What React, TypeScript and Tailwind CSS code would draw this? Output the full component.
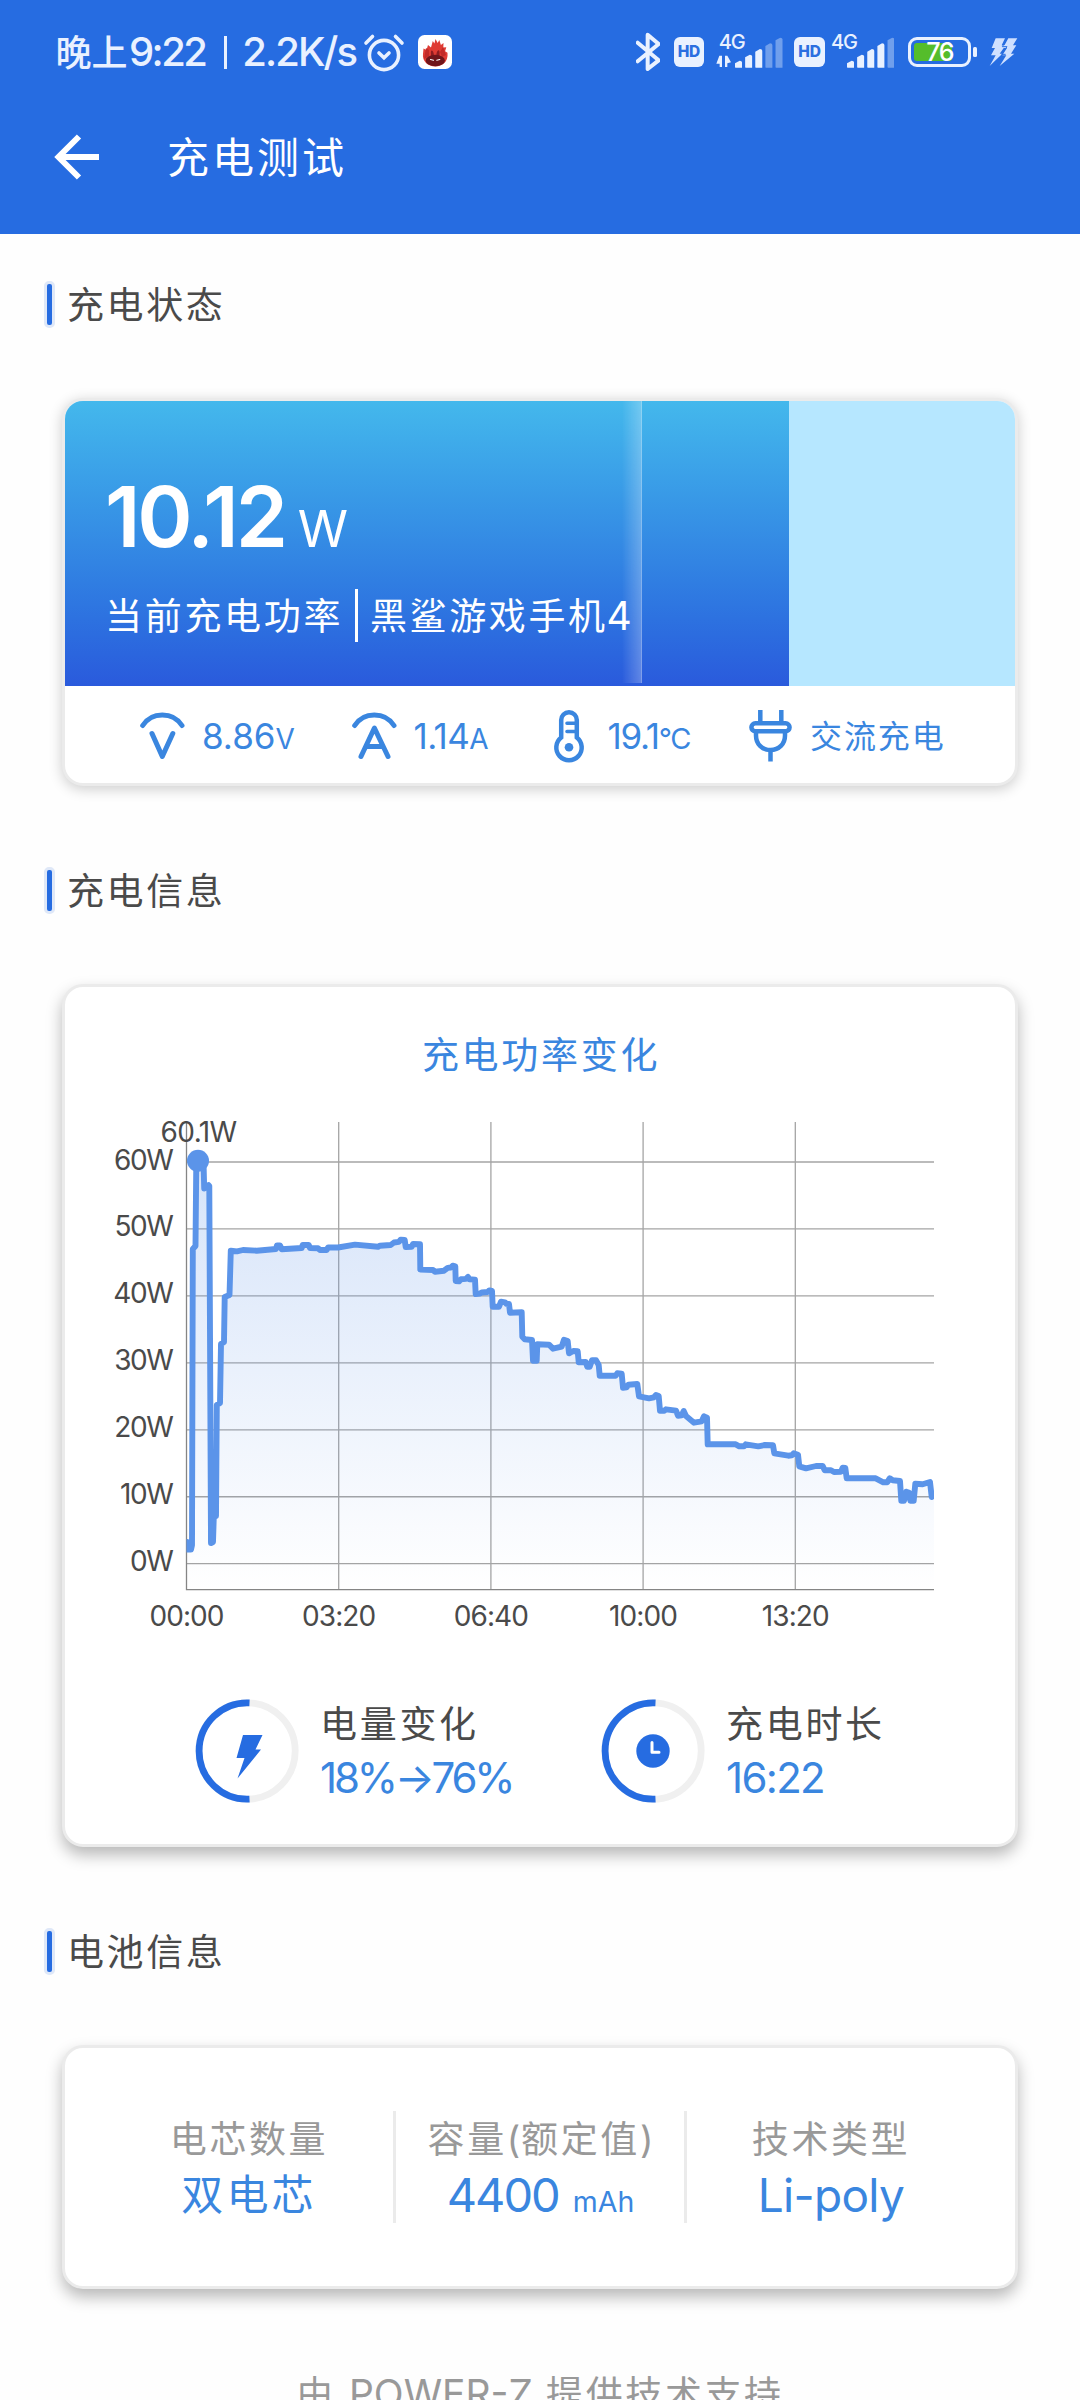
import type { ReactNode } from "react";

const FONT = "font-[Inter,'Noto_Sans_CJK_SC',sans-serif]";

/* ---------- status bar ---------- */

const ICE = "#e9f1ff";

function StatusSvg({ w, className = "", children }: { w: number; className?: string; children: ReactNode }) {
  return (
    <svg className={`h-[65px] shrink-0 ${className}`} style={{ width: w / 3 }} viewBox={`0 0 ${w} 195`} fill="none">
      {children}
    </svg>
  );
}

function AlarmIcon() {
  return (
    <svg className="ml-[6.500px] h-[40px] w-[42px] shrink-0" viewBox="0 0 42 40" fill="none" stroke={ICE} strokeWidth="3.6" strokeLinecap="round">
      <circle cx="21" cy="23" r="14.6" />
      <path d="M3 11 L9.500 4.500 M39 11 L32.500 4.500" strokeWidth="3.6" />
      <path d="M16 21 L21 25.700 L26 21" />
    </svg>
  );
}

function BenchmarkIcon() {
  return (
    <svg className="ml-[13px] h-[34px] w-[34px] shrink-0" viewBox="0 0 34 34">
      <rect width="34" height="34" rx="6.5" fill="#fff" />
      <path d="M17.5 4 l2.2 4 1.6-3 1.6 5 2.6-2 -.2 4.6 3-.4 -1.2 4 2.4 1.6 C30.5 27 24 31.5 17.5 31.5 C10 31.5 4 26 5 19 L5.5 13.5 l3 1.6 L10 10 l3 2.4 L14.8 6 l1.6 2.6z" fill="#df3b34" />
      <path d="M8 13 l3 2 v6 l-5 3z M25 12 l-3 5 2 5 4-2z" fill="#c22a28" />
      <path d="M13.6 15.5 c1.400-.5 2.200 2.500 2.400 5 h2.400 c0-2.500 1-5.500 2.300-5.200 c1.200 .3 1 4 .6 6 h-8 c-.4-2.500 -.7-5.500 .3-5.800z" fill="#8e1c20" />
      <ellipse cx="17.300" cy="25.500" rx="9.600" ry="5.800" fill="#6f151b" />
      <path d="M12.500 24.500 l3 .8 M21.800 24.500 l-3 .8" stroke="#fff" strokeWidth="1.100" strokeLinecap="round" />
    </svg>
  );
}

function HdBadge({ className }: { className: string }) {
  return (
    <div className={`mt-[17px] flex h-[30px] w-[30.500px] shrink-0 items-center justify-center rounded-[6px] bg-[#e9f1ff] text-[15.500px] leading-none font-extrabold tracking-[-0.3px] text-[#2b6ee0] ${className}`}>
      HD
    </div>
  );
}

const BAR_TOPS = [122, 104, 87, 70, 53];

function Signal({ strength, data, className }: { strength: number; data?: boolean; className: string }) {
  const x0 = data ? 57 : 48;
  return (
    <StatusSvg w={data ? 200 : 191} className={className}>
      <text x={data ? 8 : 0} y="86" fontSize="60" fontWeight="500" fill={ICE} letterSpacing="-3">4G</text>
      {data && (
        <path d="M10 107 h8 v34 h-7 v-10 L1 131z M27 141 h7 v-11 L45 127 L34 107 h-7z" fill={ICE} />
      )}
      {BAR_TOPS.map((t, i) => {
        const x = x0 + i * 30.400;
        return (
          <path key={t} d={`M${x} ${t + 8} L${x + 14} ${t} Q${x + 21} ${t} ${x + 21} ${t + 5} V143 H${x + 2} Q${x} 143 ${x} 141z`} fill={ICE} opacity={i < strength ? 1 : 0.38} />
        );
      })}
    </StatusSvg>
  );
}

function StatusBar() {
  return (
    <div className="flex h-[104px] items-start justify-between pr-[62px] pl-[55.500px] text-[#e9f1ff]">
      <div className="flex h-[104px] items-center">
        <span className="pt-[1px] text-[36px] leading-none font-medium">晚上</span>
        <span className="ml-[1.500px] text-[40px] leading-none font-medium tracking-[-2.600px]">9:22</span>
        <span className="ml-[18.500px] h-[33px] w-[3.500px] bg-[#e9f1ff]" />
        <span className="ml-[15px] text-[40px] leading-none font-medium tracking-[-1.900px]">2.2K/s</span>
        <AlarmIcon />
        <BenchmarkIcon />
      </div>
      <div className="flex items-start pt-[20px]">
        <StatusSvg w={73}>
          <path d="M5 68 L68 121 L35 147 V44 L68 72 L5 124" stroke={ICE} strokeWidth="12" strokeLinejoin="round" strokeLinecap="round" />
        </StatusSvg>
        <HdBadge className="ml-[13.500px]" />
        <Signal strength={3} data className="ml-[12px]" />
        <HdBadge className="ml-[11.500px]" />
        <Signal strength={4} className="ml-[6px]" />
        <div className="mt-[17px] ml-[13.500px] flex items-center">
          <div className="relative flex h-[30px] w-[63px] items-center rounded-[9px] border-[3px] border-[#e9f1ff]">
            <div className="ml-[3.500px] h-[18.500px] w-[37.500px] rounded-[3px] bg-[#55bd2b]" />
            <span className="absolute left-[15.500px] text-[25px] leading-none font-medium tracking-[-1.500px] text-white">76</span>
          </div>
          <div className="ml-[2.500px] h-[10px] w-[3.500px] rounded-[1.500px] bg-[#e9f1ff]" />
        </div>
        <StatusSvg w={86} className="ml-[12.500px]">
          <g fill="#cfe0ff">
            <path d="M20 55 H48 L38 76 H50 L32 101 H40 L2 138 L20 106 H6 L18 84 H8z" />
            <path d="M58 55 H85 L72 76 H82 L66 101 H76 L32 138 L52 106 H40 L54 84 H42z" />
          </g>
          <path d="M53 58 L40 80 H54 L38 103 H50" stroke="#266ce1" strokeWidth="3" />
        </StatusSvg>
      </div>
    </div>
  );
}

/* ---------- shared pieces ---------- */

function SectionTitle({ children, first }: { children: ReactNode; first?: boolean }) {
  return (
    <div className={`mb-[70px] ml-[44px] flex h-[47px] items-center ${first ? "mt-[47px]" : "mt-[81px]"}`}>
      <div className="h-[47px] w-[11px] rounded-[5px] border-3 border-[#dfe8f8] bg-[#266ce1]" />
      <h2 className="ml-[12px] pt-[2.500px] text-[37px] leading-none tracking-[2.600px] text-[#4a4a4a]">{children}</h2>
    </div>
  );
}

/* ---------- charging state card ---------- */

function VoltIcon() {
  return (
    <svg className="h-[54px] w-[45px]" viewBox="0 0 45 54" fill="none" stroke="#3a86df" strokeWidth="5" strokeLinecap="round" strokeLinejoin="round">
      <path d="M2.700 16.500 Q9.500 6 22.300 6 Q35.200 6 42 16.500" />
      <path d="M12 24.500 L22.300 47.500 L32.800 24.500" />
    </svg>
  );
}

function AmpIcon() {
  return (
    <svg className="h-[54px] w-[45px]" viewBox="0 0 45 54" fill="none" stroke="#3a86df" strokeWidth="5" strokeLinecap="round" strokeLinejoin="round">
      <path d="M2.700 16.500 Q9.500 6 22.300 6 Q35.200 6 42 16.500" />
      <path d="M9 47.500 L22.400 19 L36 47.500 M14 37.500 H31" />
    </svg>
  );
}

function ThermoIcon() {
  return (
    <svg className="h-[54px] w-[32px]" viewBox="0 0 32 54" fill="none" stroke="#3a86df" strokeWidth="4.500">
      <path d="M8.200 28.500 V11 A7.800 7.800 0 0 1 23.800 11 V28.500 A12.700 12.700 0 1 1 8.200 28.500Z" />
      <path d="M14 14.200 H23 M14 22.500 H23" strokeWidth="3.600" strokeLinecap="round" />
      <circle cx="16" cy="38.300" r="4.300" fill="#3a86df" stroke="none" />
    </svg>
  );
}

function PlugIcon() {
  return (
    <svg className="h-[54px] w-[43px]" viewBox="0 0 43 54" fill="none" stroke="#3a86df" strokeWidth="4.500">
      <path d="M11.300 1 V13 M32.300 1 V13 M21.500 41 V52.500" />
      <rect x="2.400" y="14.300" width="38.200" height="8" rx="4" />
      <path d="M7 23 V26.500 C7 35 13 41 21.500 41 C30 41 36 35 36 26.500 V23" />
    </svg>
  );
}

function StateCard() {
  return (
    <div className="mx-[62px] h-[388px] overflow-hidden rounded-[21px] border-3 border-[#ebebeb] bg-white shadow-[0_3px_14px_rgba(0,0,0,0.2)]">
      <div className="flex h-[285px] bg-[#b6e7ff]">
        <div className="relative w-[724px] bg-linear-to-b from-[#44b8ec] via-[#348ae4] to-[#2a5adc]">
          <div className="absolute top-0 left-[557px] h-[282px] w-[20px] border-r border-white/40 bg-linear-to-r from-white/0 to-white/25" />
          <div className="relative pt-[74px] pl-[40px] text-white">
            <div className="flex h-[84px] items-baseline leading-[84px]">
              <span className="text-[84px] font-semibold tracking-[-3.200px]">10.12</span>
              <span className="ml-[13px] text-[51px] tracking-tight">W</span>
            </div>
            <div className="mt-[30px] flex h-[53px] items-center whitespace-nowrap text-[37px] leading-none">
              <span className="w-[250px] pt-[2px] tracking-[2.700px]">当前充电功率</span>
              <span className="h-[53px] w-[3px] bg-white" />
              <span className="ml-[12px] flex items-center tracking-[2.600px]">
                <span className="pt-[2px]">黑鲨游戏手机</span>
                <span className="-ml-[1px] text-[39px]">4</span>
              </span>
            </div>
          </div>
        </div>
      </div>
      <div className="flex h-[97px] items-center pt-[3px] pl-[75px] text-[35px] leading-none text-[#3a86df]">
        <div className="flex w-[211.500px] items-center">
          <span className="w-[62px]"><VoltIcon /></span>
          <span>8.86<span className="text-[28px]">V</span></span>
        </div>
        <div className="flex w-[201px] items-center">
          <span className="w-[62px]"><AmpIcon /></span>
          <span className="tracking-[-0.600px]">1.14<span className="text-[28px]">A</span></span>
        </div>
        <div className="flex w-[196.500px] items-center">
          <span className="w-[55px]"><ThermoIcon /></span>
          <span className="tracking-[-1.300px]">19.1<span className="text-[29px]">°C</span></span>
        </div>
        <div className="flex items-center">
          <span className="w-[61px]"><PlugIcon /></span>
          <span className="pt-[1px] text-[32px] tracking-[1.900px]">交流充电</span>
        </div>
      </div>
    </div>
  );
}

/* ---------- power chart ---------- */

const CURVE =
  "187,1542 187.5,1549.5 191,1549.5 192,1545 192.8,1249 195.500,1246 196.3,1161 203.5,1161 204.2,1188.5 208.5,1185 209.3,1186 211,1543 213,1542 213.8,1516.5 216,1516 216.8,1405 220,1403 221,1344 224,1342 224.7,1297 229.5,1295 230.8,1250.7 237,1251.400 243,1250 256.7,1250.7 276,1249 277,1245.4 280,1245.4 281.7,1249.300 301.7,1248 302.700,1245 308.7,1245 310,1248 318,1248.200 320,1250 326.7,1250 328,1247.500 338,1247.500 355,1244.6 378,1246.800 380,1245.700 390.700,1245 394,1242.500 399,1241.800 400.700,1239.600 404.700,1240 405.700,1247 411.700,1246.800 413,1244 420,1244.300 420.300,1269.600 433,1270 435,1271.800 444,1270.700 447.700,1267.900 451,1267.500 452.700,1265.700 455.300,1266.400 455.700,1281 459,1281.400 461,1279.300 466,1278.900 468,1277 469.300,1279.300 475,1279.600 475.700,1294 480,1293.600 481.700,1292.500 487.700,1292 489.300,1290.400 492,1291 492.700,1306.700 499,1306.700 501,1301.700 505,1302.300 506.300,1303.700 509,1304 510,1312.700 521.700,1312.300 522.300,1336.700 524.700,1339.300 532,1340 533,1360.700 536.700,1360.700 537.300,1344.300 549,1344.700 553,1348.700 561.700,1346.700 564,1339.700 567.700,1341 569,1353.300 573.300,1351 577.700,1351.300 578.700,1362.300 585.700,1362 587.300,1366.700 589.700,1366.700 592,1360.300 596,1360.300 598.700,1365 599.700,1375.700 615.700,1375.700 617.300,1373.300 621.700,1373.700 623,1387.700 626.700,1387.300 628.300,1384.700 637.300,1384 639,1396.300 649,1398.300 654,1397.300 656,1395 658.700,1396 660,1410.700 664.300,1410.700 666,1409.300 676,1410.700 678,1415.700 681.700,1415.300 683.700,1411 686,1416 694,1422.700 701.700,1421.300 704,1416.300 707,1417.700 707.700,1444.300 735.700,1444.300 739.300,1446.300 744,1446.300 745.700,1444.300 758.300,1446.300 765,1445 773,1445.300 774.300,1453.300 788.300,1455.700 791.700,1455.300 793.700,1453.300 798,1454.700 799.300,1466.300 806,1468.300 816,1466 822.700,1466 824.700,1470.300 831,1470.300 834,1472 841,1471.700 842.700,1467.700 845.300,1468 846.700,1478.300 875.700,1478.300 883.300,1482.300 887.300,1482.300 889.700,1478.300 892.700,1480.300 900,1481 901.300,1500.700 904,1500.700 906.300,1491.700 909.300,1492.700 910.300,1500.700 913.700,1500.700 915.300,1483.700 922.700,1484.300 930,1482 931.700,1497 934,1495";

const WATTS = [0, 10, 20, 30, 40, 50, 60];
const TIMES = ["00:00", "03:20", "06:40", "10:00", "13:20"];
const yOf = (w: number) => 1563.7 - w * 6.695;
const xOf = (i: number) => 186.5 + i * 152.2;

function PowerChart() {
  return (
    <svg className="ml-[35px] h-[540px] w-[850px]" viewBox="100 1100 850 540" fontSize="28" fill="#4a4a4a">
      <defs>
        <linearGradient id="area" gradientUnits="userSpaceOnUse" x1="0" y1="1161" x2="0" y2="1590">
          <stop offset="0" stopColor="#5b91e8" stopOpacity="0.250" />
          <stop offset="1" stopColor="#5b91e8" stopOpacity="0" />
        </linearGradient>
        <clipPath id="plot"><rect x="186.500" y="1110" width="747.500" height="490" /></clipPath>
      </defs>
      <g stroke="#a4a4a4" strokeWidth="1.300">
        {WATTS.map((w) => <line key={w} x1="186.500" x2="934" y1={yOf(w)} y2={yOf(w)} />)}
        {TIMES.slice(1).map((t, i) => <line key={t} x1={xOf(i + 1)} x2={xOf(i + 1)} y1="1122" y2="1589.700" />)}
      </g>
      <path d="M186.500 1122 V1589.700 H934" stroke="#858585" strokeWidth="1.300" fill="none" />
      <g clipPath="url(#plot)">
        <polygon points={`187,1590 ${CURVE} 934,1590`} fill="url(#area)" />
        <polyline points={CURVE} fill="none" stroke="#5b94e9" strokeWidth="5.900" strokeLinejoin="round" strokeLinecap="round" />
      </g>
      <circle cx="198" cy="1160.800" r="11" fill="#5b94e9" />
      <text x="198.500" y="1142" textAnchor="middle" letterSpacing="-0.600">60.1W</text>
      {WATTS.map((w) => (
        <text key={w} x="172.500" y={yOf(w) + 7.500} textAnchor="end" letterSpacing="-1.400">{w}W</text>
      ))}
      {TIMES.map((t, i) => (
        <text key={t} x={xOf(i)} y="1625.500" textAnchor="middle" letterSpacing="-0.900">{t}</text>
      ))}
    </svg>
  );
}

function Ring({ children }: { children: ReactNode }) {
  return (
    <svg className="h-[104px] w-[104px] shrink-0" viewBox="0 0 104 104" fill="none">
      <circle cx="52" cy="52" r="48.200" stroke="#f0f0f0" strokeWidth="6.800" />
      <path d="M54.500 3.850 A48.200 48.200 0 1 0 54.500 100.150" stroke="#266ce1" strokeWidth="6.800" />
      {children}
    </svg>
  );
}

function InfoCard() {
  return (
    <div className="mx-[62px] h-[863px] rounded-[21px] border-3 border-[#ebebeb] bg-white shadow-[0_8px_16px_rgba(0,0,0,0.28)]">
      <h3 className="mt-[47px] pl-[2px] text-center text-[37px] leading-[44px] tracking-[2.700px] text-[#3a86df]">充电功率变化</h3>
      <div className="mt-[22px]"><PowerChart /></div>
      <div className="mt-[59px] flex h-[104px] items-center pl-[130px] leading-none">
        <div className="flex w-[406px] items-center">
          <Ring><path d="M48 36 H67.500 L60.500 50.500 H66 L42.500 79.500 L49.500 59 H41.500z" fill="#266ce1" /></Ring>
          <div className="ml-[21px] pt-[3px]">
            <div className="text-[37px] tracking-[2.700px] text-[#4a4a4a]">电量变化</div>
            <div className="mt-[14px] text-[42px] tracking-[-3.200px] text-[#3a86df]">18%→76%</div>
          </div>
        </div>
        <div className="flex items-center">
          <Ring>
            <circle cx="52" cy="52" r="16.700" fill="#266ce1" />
            <path d="M51 43.500 V53.200 H58" stroke="#fff" strokeWidth="3" strokeLinecap="round" strokeLinejoin="round" />
          </Ring>
          <div className="ml-[21px] pt-[3px]">
            <div className="text-[37px] tracking-[2.700px] text-[#4a4a4a]">充电时长</div>
            <div className="mt-[14px] text-[42px] tracking-[-1.700px] text-[#3a86df]">16:22</div>
          </div>
        </div>
      </div>
    </div>
  );
}

/* ---------- battery card ---------- */

function BatteryCell({ label, className, children }: { label: ReactNode; className: string; children: ReactNode }) {
  return (
    <div className={`flex flex-col items-center whitespace-nowrap ${className}`}>
      <div className="mt-[9.500px] text-[37px] leading-[38px] tracking-[2.600px] text-[#999]">{label}</div>
      <div className="mt-[13px] flex h-[46px] items-baseline leading-[46px] text-[#3a86df]">{children}</div>
    </div>
  );
}

function BatteryCard() {
  return (
    <div className="mx-[62px] flex h-[244px] rounded-[21px] border-3 border-[#ebebeb] bg-white pt-[63px] shadow-[0_8px_16px_rgba(0,0,0,0.28)]">
      <BatteryCell label="电芯数量" className="h-[112px] w-[331px] border-r-3 border-[#ebebeb] pl-[40px]">
        <span className="text-[42px] tracking-[3.200px]">双电芯</span>
      </BatteryCell>
      <BatteryCell
        label={<>容量<span className="tracking-[0.800px]">(</span>额定值<span className="tracking-normal">)</span></>}
        className="h-[112px] w-[291px] border-r-3 border-[#ebebeb] pl-[1px]"
      >
        <span className="text-[47px] tracking-[-2px]">4400</span>
        <span className="ml-[14px] text-[28.500px]">mAh</span>
      </BatteryCell>
      <BatteryCell label="技术类型" className="h-[112px] flex-1 pr-[40px]">
        <span className="text-[46px] tracking-[-0.700px]">Li-poly</span>
      </BatteryCell>
    </div>
  );
}

export default function App() {
  return (
    <div className={`h-[2400px] w-[1080px] overflow-hidden bg-[#fefefe] ${FONT}`}>
      <header className="h-[234px] bg-[#266ce1]">
        <StatusBar />
        <div className="flex h-[106px] items-center text-white">
          <svg className="ml-[54px] h-[46px] w-[46px]" viewBox="0 0 46 46" fill="none" stroke="#fff" strokeWidth="6">
            <path d="M25 2.500 L4.500 23 L25 43.500 M5 23 H45" />
          </svg>
          <h1 className="ml-[67px] pt-[2px] text-[42px] leading-none tracking-[3px]">充电测试</h1>
        </div>
      </header>
      <main>
        <SectionTitle first>充电状态</SectionTitle>
        <StateCard />
        <SectionTitle>充电信息</SectionTitle>
        <InfoCard />
        <SectionTitle>电池信息</SectionTitle>
        <BatteryCard />
        <p className="mt-[81px] text-center text-[37px] leading-[48px] tracking-[2.600px] text-[#999]">
          由 <span className="text-[39px] tracking-[0px]">POWER-Z</span> 提供技术支持
        </p>
      </main>
    </div>
  );
}
